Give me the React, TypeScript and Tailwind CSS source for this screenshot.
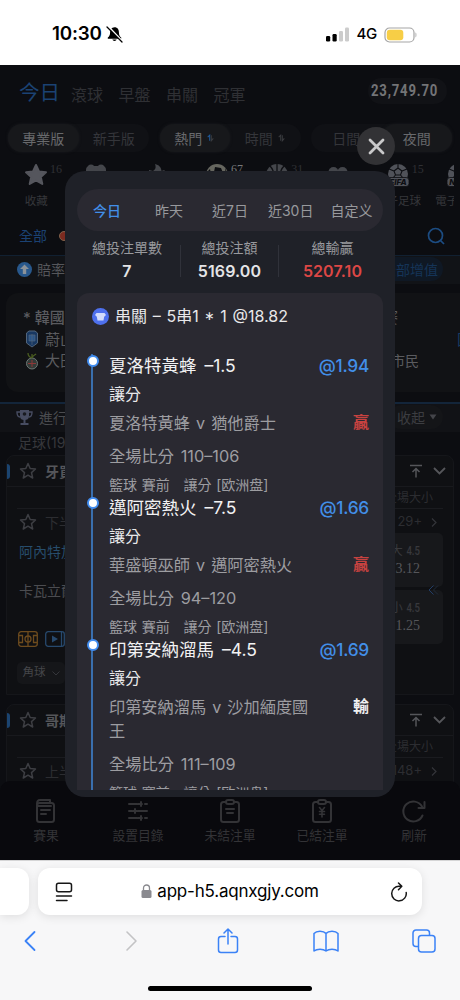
import type { ReactNode } from "react";

interface Leg {
    pick: string;
    odds: string;
    match: string;
    score: string;
    result: string;
    won: boolean;
}

const legs: Leg[] = [
    { pick: "夏洛特黃蜂 –1.5", odds: "@1.94", match: "夏洛特黃蜂 v 猶他爵士", score: "110–106", result: "贏", won: true },
    { pick: "邁阿密熱火 –7.5", odds: "@1.66", match: "華盛頓巫師 v 邁阿密熱火", score: "94–120", result: "贏", won: true },
    { pick: "印第安納溜馬 –4.5", odds: "@1.69", match: "印第安納溜馬 v 沙加緬度國王", score: "111–109", result: "輸", won: false },
];

const StatusBar = () => (
    <div className="h-[65px] shrink-0 bg-white flex items-center justify-between pl-[52px] pr-[42px] pt-[4px]">
        <div className="flex items-center gap-1 text-black">
            <span className="text-[18.8px] font-semibold tracking-[-0.2px]">10:30</span>
            <svg width="17" height="17" viewBox="0 0 17 17">
                <path d="M8.5 1.2c-3 0-4.4 2.2-4.4 5 0 3-.9 4.100-2.300 5.300v1.300h13.400v-1.300c-1.400-1.200-2.300-2.300-2.300-5.300 0-2.800-1.400-5-4.400-5zM6.300 13.600a2.300 2 0 0 0 4.400 0z" fill="#000" />
                <path d="M2.500 .5l14 15" stroke="#fff" strokeWidth="1.600" />
                <path d="M1 1l15 15" stroke="#000" strokeWidth="1.300" strokeLinecap="round" />
            </svg>
        </div>
        <div className="flex items-center">
            <svg width="24" height="15" viewBox="0 0 24 15">
                <rect x="0" y="9" width="4.200" height="5.500" rx="1.200" fill="#000" />
                <rect x="6.500" y="7" width="4.200" height="7.500" rx="1.200" fill="#000" />
                <rect x="13" y="4" width="4" height="10.500" rx="1.200" fill="#ccc" />
                <rect x="19" y="0.500" width="4" height="14" rx="1.200" fill="#ccc" />
            </svg>
            <span className="ml-[7px] text-[15px] font-medium text-black tracking-[-0.3px]">4G</span>
            <svg className="ml-[7px]" width="34" height="16" viewBox="0 0 34 16">
                <rect x="1" y="1" width="29" height="14" rx="4.500" fill="none" stroke="#a5a5a5" strokeWidth="1.200" />
                <rect x="2.800" y="2.800" width="16.500" height="10.400" rx="3" fill="#f7ce46" />
                <path d="M31.500 5.600v4.800c1.200-.4 1.200-4.400 0-4.800z" fill="#a5a5a5" />
            </svg>
        </div>
    </div>
);

const SortIcon = ({ active }: { active?: boolean }) => (
    <svg width="9" height="8" viewBox="0 0 9 10" fill="none" strokeWidth="1.300">
        <path d="M1 4l2.500-2.500V8.500" stroke={active ? "#1f5a9c" : "#3a3b3f"} />
        <path d="M5.500 1.500v7L8 5.500" stroke="#3a3b3f" />
    </svg>
);

const Toggle = ({ left, right, leftOn }: { left: ReactNode; right: ReactNode; leftOn: boolean }) => {
    const on = "bg-[#17181b] text-[#68696c] rounded-full shadow-[0_0_3px_#1a1b1f]";
    const off = "text-[#34353a]";
    return (
        <div className="w-[141px] h-[28px] rounded-full bg-[#101115] grid grid-cols-2 text-[14px]">
            <div className={`flex items-center justify-center gap-1 ${leftOn ? on : off}`}>{left}</div>
            <div className={`flex items-center justify-center gap-1 ${leftOn ? off : on}`}>{right}</div>
        </div>
    );
};

const Ball = ({ basket }: { basket?: boolean }) => (
    <svg width="24" height="24" viewBox="0 0 24 24">
        <circle cx="12" cy="12" r="11" fill={basket ? "#44464b" : "#66665f"} />
        {basket ? (
            <path d="M12 1v22M1 9h22M5 3c5 5 5 14 0 18M19 3c-5 5-5 14 0 18" stroke="#0d0e12" fill="none" strokeWidth="1.300" />
        ) : (
            <path d="M10 4l6 1 2 5-5 3-4-4zM1 10l4-4 1 5-3 4zM20 5l3 6-2 1z" fill="#0d0e12" />
        )}
    </svg>
);

const EsportBall = ({ label }: { label: string }) => (
    <svg width="24" height="24" viewBox="0 0 24 24">
        <circle cx="12" cy="11" r="10" fill="#505259" />
        <path d="M12 5l4 3-1.500 4h-5L8 8zM12 5V1M16 8l5-2M8 8L3 6M9.500 12L7 15M14.500 12l2.500 3" fill="none" stroke="#0d0e12" strokeWidth="1.100" />
        <rect x="1" y="14.500" width="22" height="9" rx="3" fill="#505259" stroke="#0d0e12" strokeWidth="0.800" />
        <text x="12" y="21.800" fontSize="8" fontWeight="800" fontStyle="italic" textAnchor="middle" fill="#0d0e12" fontFamily="Inter">{label}</text>
    </svg>
);

const sports: { icon: ReactNode; count?: string; label?: string; bright?: boolean }[] = [
    {
        icon: (
            <svg width="24" height="24" viewBox="0 0 24 24" fill="#55565d" stroke="#55565d" strokeWidth="2" strokeLinejoin="round">
                <path d="M12 2l3 6.500 7 .8-5.200 4.700 1.500 7L12 17.500 5.700 21l1.500-7L2 9.300l7-.8z" />
            </svg>
        ),
        count: "16",
        label: "收藏",
    },
    {
        icon: (
            <svg width="24" height="24" viewBox="0 0 24 24" fill="#44464b">
                <rect x="2" y="3" width="20" height="14" rx="4" />
                <circle cx="7" cy="5" r="3.500" /><circle cx="17" cy="5" r="3.500" />
            </svg>
        ),
    },
    {
        icon: (
            <svg width="24" height="24" viewBox="0 0 24 24" fill="#44464b">
                <path d="M10 1c4 1 6 3 6.500 7l3-1v12H4V7l4 1c3-2 3-4 2-7z" />
            </svg>
        ),
    },
    { icon: <Ball />, count: "67", bright: true },
    { icon: <Ball basket />, count: "31" },
    {
        icon: (
            <svg width="24" height="24" viewBox="0 0 24 24" fill="#44464b">
                <circle cx="7.500" cy="9" r="5" /><circle cx="16.500" cy="9" r="5" />
            </svg>
        ),
    },
    { icon: <EsportBall label="FIFA" />, count: "15", label: "電子足球" },
    { icon: <EsportBall label="NBA" />, label: "電子籃球" },
];

const Star = () => (
    <svg width="18" height="18" viewBox="0 0 18 18" fill="none" stroke="#3d3e43" strokeWidth="1.500" strokeLinejoin="round">
        <path d="M9 1.500l2.200 5 5.300.5-4 3.600 1.200 5.400L9 13.200 4.300 16l1.200-5.400-4-3.600 5.300-.5z" />
    </svg>
);

const LeagueHeader = ({ name }: { name: string }) => (
    <div className="h-[31px] flex items-center border-b border-[#18191d]">
        <div className="w-[3px] h-[15px] rounded-r bg-[#1b4470]" />
        <div className="ml-[9px]"><Star /></div>
        <span className="ml-[8px] text-[14px] font-bold text-[#55565a]">{name}</span>
        <svg className="ml-auto" width="14" height="14" viewBox="0 0 14 14" fill="none" stroke="#55565a" strokeWidth="1.500">
            <path d="M1 1.500h12M7 13.500V4.500M3.500 8L7 4.500 10.500 8" />
        </svg>
        <svg className="ml-[10px] mr-[7px]" width="13" height="8" viewBox="0 0 13 8" fill="none" stroke="#55565a" strokeWidth="1.800">
            <path d="M1 1l5.500 5.500L12 1" />
        </svg>
    </div>
);

const MarketRow = ({ half, count }: { half: string; count: string }) => (
    <>
        <div className="h-[22px] mx-[10px] pr-[10px] flex items-center justify-end border-b border-[#1a1b1f] text-[12px] text-[#2c2d31]">全場大小</div>
        <div className="h-[26px] pl-[12px] pr-[16px] flex items-center text-[14px] text-[#2c2d31]">
            <Star />
            <span className="ml-[8px]">{half}</span>
            <span className="ml-auto text-[13px]">{count}</span>
            <svg className="ml-[9px]" width="6" height="9" viewBox="0 0 6 9" fill="none" stroke="#34353a" strokeWidth="1.200"><path d="M1 .5l4 4-4 4" /></svg>
        </div>
    </>
);

const OddsBox = ({ label, value }: { label: string; value: string }) => (
    <div className="w-[90px] h-[54px] rounded-[5px] bg-[#17181b] flex flex-col items-end justify-center pr-[23px]">
        <span className="text-[12px] leading-[18px] text-[#38393d]">{label} <b className="inline-block origin-right scale-x-[0.8] ml-[-3px] font-medium font-['Roboto',sans-serif]">4.5</b></span>
        <span className="text-[14px] leading-[18px] text-[#55565a] font-['Liberation_Serif',serif]">{value}</span>
    </div>
);

const TabItem = ({ label, children }: { label: string; children: ReactNode }) => (
    <div className="w-[92px] flex flex-col items-center text-[12.8px] leading-[18px] text-[#333336]">
        <svg width="26" height="26" viewBox="0 0 26 26" fill="none" stroke="#333336" strokeWidth="2" strokeLinecap="round" strokeLinejoin="round">{children}</svg>
        <span className="mt-[3px]">{label}</span>
    </div>
);

const Lobby = () => (
    <div className="h-full flex flex-col bg-[#0c0d11] overflow-hidden whitespace-nowrap">
        <div className="h-[55px] shrink-0 pl-[19px] pr-[13px] flex items-center">
            <span className="pt-[2px] text-[20.5px] text-[#1b4273]">今日</span>
            <div className="ml-[11px] pt-[4px] flex gap-[15.500px] text-[16px] text-[#2f3034]">
                <span>滾球</span><span>早盤</span><span>串關</span><span>冠軍</span>
            </div>
            <div className="ml-auto w-[79px] h-[26px] mb-[3px] rounded-full bg-[#111216] flex items-center pl-[3px] text-[16px] tracking-[1px] font-bold text-[#737477] font-['Roboto',sans-serif]">
                <span className="inline-block origin-left scale-x-[0.82]">23,749.70</span>
            </div>
        </div>
        <div className="h-[36px] shrink-0 pt-[4px] px-[8px] flex justify-between">
            <Toggle left="專業版" right="新手版" leftOn />
            <Toggle left={<>熱門<SortIcon active /></>} right={<>時間<SortIcon /></>} leftOn />
            <Toggle left="日間" right="夜間" leftOn={false} />
        </div>
        <div className="h-[61px] shrink-0 ml-[6px] mr-[6px] pt-[7px] flex overflow-hidden">
            {sports.map((s, i) => (
                <div key={i} className="relative w-[60.300px] shrink-0 flex flex-col items-center">
                    {s.icon}
                    {s.count && <span className={`absolute left-[44px] top-[-1px] text-[12px] leading-[14px] font-['Liberation_Serif',serif] ${s.bright ? "text-[#77787a]" : "text-[#2f3034]"}`}>{s.count}</span>}
                    <span className="mt-[6px] text-[11.500px] leading-[17px] text-[#36373b]">{s.label}</span>
                </div>
            ))}
        </div>
        <div className="h-[38px] shrink-0 pl-[19px] pr-[15px] pb-[1px] flex items-center">
            <span className="text-[14px] text-[#1b4273]">全部</span>
            <div className="ml-[12px] size-[10px] rounded-full bg-[#7c2b20] border border-[#80604a]" />
            <svg className="ml-auto" width="18" height="18" viewBox="0 0 18 18" fill="none" stroke="#1c4c82" strokeWidth="1.700"><circle cx="8.500" cy="8.500" r="7" /><path d="M13.500 13.500l3.500 3.500" /></svg>
        </div>
        <div className="h-[29px] shrink-0 border-t border-[#112031] bg-[#111317] pb-[2px] pl-[17px] pr-[17px] flex items-center">
            <svg width="15" height="15" viewBox="0 0 15 15"><circle cx="7.500" cy="7.500" r="7.500" fill="#28588c" /><path d="M7.500 2.500L12 7H9.200v5H5.800V7H3z" fill="#8b9299" /></svg>
            <span className="ml-[5px] text-[14px] text-[#55565a]">賠率</span>
            <span className="ml-auto h-[24px] px-[5px] rounded-full bg-[#0f1824] flex items-center text-[14px] text-[#153457]">全部增值</span>
        </div>
        <div className="h-[99px] shrink-0 mt-[9px] ml-[6px] rounded-l-[12px] bg-[#111215] pt-[14px] pl-[17px] text-[15px] leading-[21.500px] text-[#5a5b5f] overflow-hidden">
            <div className="flex"><b className="font-medium">* 韓國</b><span className="ml-auto mr-[62px]">賽</span></div>
            <div className="flex items-center">
                <svg className="ml-[3px] mr-[7px]" width="12" height="18" viewBox="0 0 12 18"><path d="M.5 3L3 1h6l2.500 2v10L6 17 .5 13z" fill="#183862" stroke="#53657a" /><path d="M3 5h6v6H3zM6 4v11" fill="#2a568a" stroke="#53657a" strokeWidth=".7" /></svg>
                蔚山<span className="ml-auto mr-[-12px] text-[#173a62]">回</span>
            </div>
            <div className="flex items-center">
                <svg className="ml-[3px] mr-[7px]" width="12" height="18" viewBox="0 0 12 18" fill="none"><circle cx="6" cy="11.500" r="5.500" fill="#333b38" stroke="#6d7775" /><path d="M2 11.500h8M6 8v7" stroke="#8d3838" /><path d="M6 6C3 5 2 3 2 1M6 6c1-3 3-3 4-4M6 6V2" stroke="#495c20" strokeWidth="1.300" /></svg>
                大田<span className="ml-auto mr-[41px] text-[14px]">市民</span>
            </div>
        </div>
        <div className="h-[30px] shrink-0 mt-[10px] border-t-2 border-[#13253a] bg-[#111216] pb-[2px] pl-[16px] pr-[17px] flex items-center text-[14px] text-[#4b4c50]">
            <svg width="17" height="17" viewBox="0 0 17 17"><path d="M4 1h9v6c0 3-2 4-4.500 4S4 10 4 7zM7.500 11h2v3h3v2h-8v-2h3z" fill="#474c61" /><path d="M4 3H1c0 4 1 5 3 5M13 3h3c0 4-1 5-3 5" fill="none" stroke="#474c61" strokeWidth="1.400" /><circle cx="8.500" cy="5" r="1.800" fill="#181a20" /></svg>
            <span className="ml-[6px]">進行</span>
            <span className="ml-auto h-[24px] rounded-full bg-[#141518] pl-[8px] pr-[6px] flex items-center gap-[4px] text-[#3c3d41]">
                收起
                <svg width="8" height="6" viewBox="0 0 8 6" fill="#44454a"><path d="M.5.500h7L4 5.500z" /></svg>
            </span>
        </div>
        <div className="h-[23px] shrink-0 pl-[18px] pb-[2px] flex items-center text-[14px] text-[#36373b]">足球(19)</div>
        <div className="h-[240px] shrink-0 mx-[6px] rounded-t-[8px] border border-[#15161a] bg-[#0f1013]">
            <LeagueHeader name="牙買加" />
            <MarketRow half="下半場" count="29+" />
            <div className="flex justify-between pl-[12px] pr-[10px]">
                <div className="flex flex-col text-[14px]">
                    <span className="mt-[7px] leading-[20px] text-[#274d6c]">阿內特加</span>
                    <span className="mt-[19px] leading-[20px] text-[#4b4c50]">卡瓦立爾</span>
                    <div className="mt-[30px] ml-[-1px] flex gap-[7px]">
                        <svg width="20" height="16" viewBox="0 0 20 16" fill="none" stroke="#6d4b1e" strokeWidth="1.300"><rect x=".7" y=".7" width="18.600" height="14.600" rx="2.500" /><path d="M10 .7v14.600M1 4.500h3.500v7H1M19 4.500h-3.500v7H19" /><circle cx="10" cy="8" r="3" /></svg>
                        <svg width="20" height="16" viewBox="0 0 20 16" fill="none" stroke="#27496d" strokeWidth="1.300"><rect x=".7" y=".7" width="18.600" height="14.600" rx="2.500" /><path d="M16.500 1v14" /><path d="M7 4.500l6 3.500-6 3.500z" fill="#27496d" stroke="none" /></svg>
                    </div>
                    <div className="mt-[15px] ml-[-2px] w-[48px] h-[22px] rounded-[5px] bg-[#151619] flex items-center justify-center gap-[6px] text-[11.500px] text-[#45464a]">
                        角球
                        <svg width="8" height="5" viewBox="0 0 8 5" fill="none" stroke="#34353a"><path d="M.5.500L4 4 7.500.500" /></svg>
                    </div>
                </div>
                <div className="relative mt-[-2px] flex flex-col gap-[3px]">
                    <OddsBox label="大" value="3.12" />
                    <OddsBox label="小" value="1.25" />
                    <svg className="absolute right-[4px] top-[52px]" width="11" height="10" viewBox="0 0 11 10" fill="none"><path d="M5.500.500L1 5l4.500 4.500" stroke="#223d66" /><path d="M10 .5L5.500 5 10 9.500" stroke="#202b3b" /></svg>
                </div>
            </div>
        </div>
        <div className="h-[90px] shrink-0 mt-[9px] mx-[6px] rounded-t-[8px] border border-[#15161a] bg-[#0f1013]">
            <LeagueHeader name="哥斯達" />
            <MarketRow half="上半場" count="148+" />
        </div>
    </div>
);

const BottomTabs = () => (
    <div className="absolute inset-x-0 bottom-0 h-[79px] rounded-t-[10px] bg-[#09090d] pt-[17px] flex">
        <TabItem label="賽果">
            <rect x="4" y="5" width="17" height="19" rx="2.500" /><path d="M4 6c0-2 1-4 3-4h10v3M8 12h9M8 16h5M4 8h14" />
        </TabItem>
        <TabItem label="設置目錄">
            <path d="M4 6h8M20 6h2M16 4v4M13 6h4M4 13h3M13 13h9M10 11v4M8 13h4M4 20h8M20 20h2M16 18v4M13 20h4" />
        </TabItem>
        <TabItem label="未結注單">
            <rect x="4" y="4" width="18" height="20" rx="2.500" /><rect x="9" y="2" width="8" height="4" rx="2" fill="#09090d" /><path d="M9 11h8M10 15h6" />
        </TabItem>
        <TabItem label="已結注單">
            <rect x="4" y="4" width="18" height="20" rx="2.500" /><rect x="9" y="2" width="8" height="4" rx="2" fill="#09090d" /><path d="M10.500 9.500L13 12.500l2.500-3M13 12.500V19M10.500 13.500h5M10.500 16.300h5" strokeWidth="1.600" />
        </TabItem>
        <TabItem label="刷新">
            <path d="M21.500 17.500A10 10 0 1 1 21 8.500M23.500 4v6h-6" />
        </TabItem>
    </div>
);

const Stat = ({ label, value, red }: { label: string; value: string; red?: boolean }) => (
    <div className="flex-1 flex flex-col items-center">
        <span className="text-[14px] leading-[20px] text-[#98999d]">{label}</span>
        <span className={`mt-[2px] text-[16px] leading-[22px] font-semibold tracking-[0.1px] ${red ? "text-[#dc4745]" : "text-[#e4e4e6]"}`}>{value}</span>
    </div>
);

const LegItem = ({ leg }: { leg: Leg }) => (
    <div className="relative pl-[32px] pr-[14px]">
        <div className="absolute left-[14px] top-0 bottom-0 w-[2px] bg-[#3a6fae]" />
        <div className="absolute left-[10px] top-[1px] size-[12px] rounded-full border-[2.500px] border-[#428df0] bg-white" />
        <div className="h-[24px] flex items-center justify-between text-[17.500px] text-[#f2f2f3]">
            <span className="[word-spacing:3px]">{leg.pick}</span>
            <span className="text-[17.300px] text-[#428fe8] font-medium tracking-[-0.250px]">{leg.odds}</span>
        </div>
        <div className="mt-[4px] h-[24px] leading-[24px] text-[16px] text-[#e8e8ea]">讓分</div>
        <div className="mt-[5px] flex items-start justify-between text-[16.200px] leading-[24px] text-[#9d9da1]">
            <span className="w-[210px] [word-spacing:1.500px]">{leg.match}</span>
            <span className={`text-[16px] leading-[22px] font-bold ${leg.won ? "text-[#c74240]" : "text-[#f0f0f1]"}`}>{leg.result}</span>
        </div>
        <div className="mt-[9px] h-[24px] leading-[24px] text-[16.300px] text-[#9d9da1] [word-spacing:2px]">全場比分 {leg.score}</div>
        <div className="mt-[6px] h-[22px] leading-[22px] text-[14px] text-[#9d9da1] whitespace-pre [word-spacing:0.700px]">籃球 賽前   讓分 [欧洲盘]</div>
    </div>
);

const BetModal = () => (
    <div className="absolute left-[65px] top-[106px] w-[330px] h-[626px] rounded-[20px] bg-[#1f2128] px-[12px] pt-[18px] pb-[7px] flex flex-col">
        <div className="h-[42px] shrink-0 rounded-full bg-[#2a2931] flex items-center pl-[16px] text-[14px] text-[#98999d] whitespace-nowrap">
            <span className="text-[#428fe8] font-medium">今日</span>
            <span className="ml-[34px]">昨天</span>
            <span className="ml-[29px]">近7日</span>
            <span className="ml-[20px]">近30日</span>
            <span className="ml-[17px]">自定义</span>
        </div>
        <div className="mt-[7px] h-[55px] shrink-0 flex">
            <div className="w-[103px] pr-[3px] flex"><Stat label="總投注單數" value="7" /></div>
            <div className="w-px h-[32px] mt-[7px] bg-[#30323a]" />
            <div className="w-[97px] flex"><Stat label="總投注額" value="5169.00" /></div>
            <div className="w-px h-[32px] mt-[7px] bg-[#30323a]" />
            <div className="flex-1 pl-[3px] flex"><Stat label="總輸贏" value="5207.10" red /></div>
        </div>
        <div className="flex-1 min-h-0 overflow-hidden rounded-t-[12px] bg-[#2a2931]">
            <div className="h-[46px] pl-[15px] flex items-center text-[16px] text-[#e8e8ea] [word-spacing:1.200px]">
                <svg className="mr-[6px]" width="17" height="17" viewBox="0 0 17 17">
                    <circle cx="8.500" cy="8.500" r="8.500" fill="#4e70ed" />
                    <path d="M4.500 5h8l1.500 2-1.800 1.800-.7 3.700h-6l-.7-3.700L3 7z" fill="#d2dcfb" />
                </svg>
                串關 – 5串1 * 1 @18.82
            </div>
            <div className="mt-[15px]">
                {legs.map((leg) => <LegItem key={leg.pick} leg={leg} />)}
            </div>
        </div>
    </div>
);

const BrowserBar = () => (
    <div className="h-[140px] shrink-0 bg-[#f7f7f8] border-t border-[#d5d5d6] flex flex-col overflow-hidden">
        <div className="mt-[7px] h-[47px] shrink-0 flex gap-[9px]">
            <div className="w-[29px] rounded-r-[12px] bg-white shadow-[0_2px_10px_#0000001a]" />
            <div className="w-[384px] rounded-[12px] bg-white shadow-[0_2px_10px_#0000001a] flex items-center justify-between pl-[17px] pr-[14px]">
                <svg width="18" height="20" viewBox="0 0 18 20" fill="none" stroke="#161616" strokeWidth="1.500" strokeLinecap="round"><rect x="1.500" y="1.200" width="15" height="8.500" rx="2" /><path d="M1.500 14h15M1.500 18.500h10.500" /></svg>
                <div className="mr-[3px] flex items-center gap-[5px] text-[17px] text-black">
                    <svg width="11" height="15" viewBox="0 0 11 15"><rect x=".5" y="6" width="10" height="8" rx="1.500" fill="#8a8a8f" /><path d="M2.500 6.500V4c0-4 6-4 6 0v2.500" fill="none" stroke="#8a8a8f" strokeWidth="1.300" /></svg>
                    <span className="tracking-[-0.200px]">app-h5.aqnxgjy.com</span>
                </div>
                <svg width="18" height="20" viewBox="0 0 18 20" fill="none" stroke="#161616" strokeWidth="1.500" strokeLinecap="round" strokeLinejoin="round"><path d="M16.200 10.500A7.300 7.300 0 1 1 9.500 4.300h2M8.500 1l3.300 3.300-3.300 3.400" /></svg>
            </div>
        </div>
        <div className="mt-[12px] h-[28px] flex items-center pl-[22px]">
            <svg width="15" height="22" viewBox="0 0 15 22" fill="none" stroke="#3b82f6" strokeWidth="1.800" strokeLinecap="round" strokeLinejoin="round"><path d="M12.500 2L3.500 11l9 9" /></svg>
            <svg className="ml-[87px]" width="15" height="22" viewBox="0 0 15 22" fill="none" stroke="#c3c3c5" strokeWidth="1.600" strokeLinecap="round" strokeLinejoin="round"><path d="M3 2l9 9-9 9" /></svg>
            <svg className="ml-[78px]" width="22" height="26" viewBox="0 0 22 26" fill="none" stroke="#3b82f6" strokeWidth="1.500" strokeLinecap="round" strokeLinejoin="round"><path d="M8 8.500H4a2.500 2.500 0 0 0-2.500 2.500v11A2.500 2.500 0 0 0 4 24.500h14a2.500 2.500 0 0 0 2.500-2.500V11A2.500 2.500 0 0 0 18 8.500h-4M11 16V1M7 5l4-4 4 4" /></svg>
            <svg className="ml-[74px]" width="26" height="23" viewBox="0 0 26 23" fill="none" stroke="#3b82f6" strokeWidth="1.500" strokeLinejoin="round"><path d="M13 3.500C10.500.500 3.500.500 1 3.500v17.500c3-2.500 9-2.500 12 0 3-2.500 9-2.500 12 0V3.500c-2.500-3-9.500-3-12 0zM13 3.500V21" /></svg>
            <svg className="ml-[73px]" width="24" height="24" viewBox="0 0 24 24" fill="none" stroke="#3b82f6" strokeWidth="1.500" strokeLinejoin="round"><rect x="6.500" y="6.500" width="16.500" height="16.500" rx="3" /><path d="M6.500 17.500H4a3 3 0 0 1-3-3V4a3 3 0 0 1 3-3h10.500a3 3 0 0 1 3 3v2.500" /></svg>
        </div>
        <div className="mt-[31px] mx-auto w-[164px] h-[5px] shrink-0 rounded-full bg-black" />
    </div>
);

const App = () => (
    <div className="w-[460px] h-[1000px] flex flex-col overflow-hidden font-['Inter','Noto_Sans_CJK_TC',sans-serif]">
        <StatusBar />
        <div className="relative h-[795px] shrink-0">
            <Lobby />
            <BottomTabs />
            <BetModal />
            <button aria-label="close" className="absolute left-[357px] top-[62px] size-[38px] rounded-full bg-[#323235] flex items-center justify-center">
                <svg width="17" height="17" viewBox="0 0 17 17" stroke="#c9c9ca" strokeWidth="2.800" strokeLinecap="round"><path d="M2 2l13 13M15 2L2 15" /></svg>
            </button>
        </div>
        <BrowserBar />
    </div>
);

export default App;
